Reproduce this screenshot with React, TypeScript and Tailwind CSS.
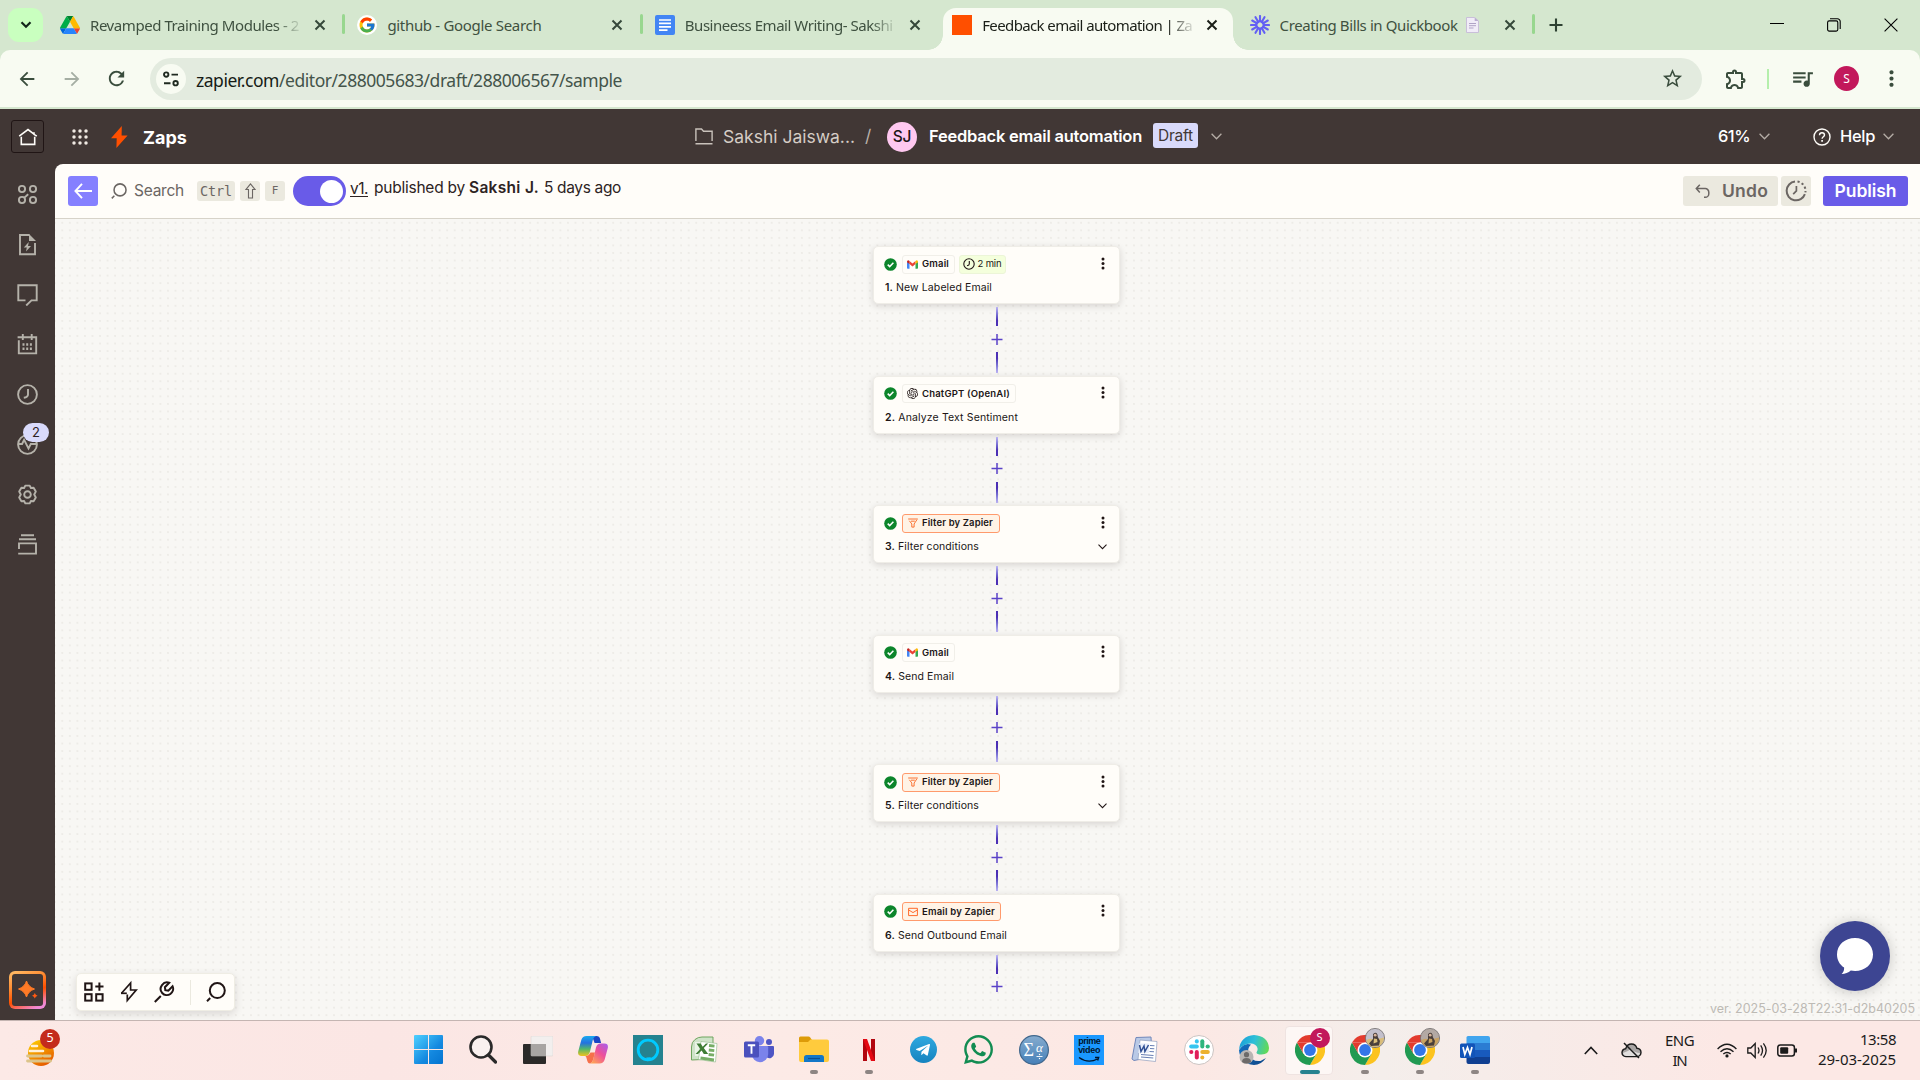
import { useLayoutEffect, useRef, type ReactNode } from "react";
import { FcGoogle } from "react-icons/fc";
import { SiOpenai } from "react-icons/si";
import { FaWhatsapp, FaTelegramPlane } from "react-icons/fa";
import {
  MdArrowBack,
  MdArrowForward,
  MdRefresh,
  MdStarOutline,
  MdOutlineExtension,
  MdQueueMusic,
  MdMoreVert,
} from "react-icons/md";

/* A line of text whose tracking is adjusted so that it fills the given width. */
function Fit({ w, className = "", children }: { w: number; className?: string; children: ReactNode }) {
  const ref = useRef<HTMLSpanElement>(null);
  useLayoutEffect(() => {
    const el = ref.current;
    if (!el) return;
    el.style.letterSpacing = "0px";
    const natural = el.getBoundingClientRect().width;
    const count = (el.textContent || "").length || 1;
    el.style.letterSpacing = `${(w - natural) / count}px`;
  }, [w]);
  return (
    <span ref={ref} className={`inline-block shrink-0 whitespace-nowrap ${className}`}>
      {children}
    </span>
  );
}

/* ---------- Browser ---------- */

function CloseX({ className = "" }: { className?: string }) {
  return (
    <svg width="12" height="12" viewBox="0 0 12 12" className={className}>
      <path d="M1.5 1.5l9 9M10.5 1.5l-9 9" stroke="currentColor" strokeWidth="2" fill="none" />
    </svg>
  );
}

const DriveIcon = () => (
  <svg width="20" height="18" viewBox="0 0 87.3 78">
    <path fill="#0066da" d="m6.6 66.85 3.85 6.65c.8 1.4 1.95 2.5 3.3 3.3l13.75-23.8h-27.5c0 1.55.4 3.1 1.2 4.5z" />
    <path fill="#00ac47" d="m43.65 25-13.75-23.8c-1.35.8-2.5 1.9-3.3 3.3l-25.4 44a9.06 9.06 0 0 0-1.2 4.5h27.5z" />
    <path fill="#ea4335" d="m73.55 76.8c1.35-.8 2.5-1.9 3.3-3.3l1.6-2.75 7.65-13.25c.8-1.4 1.2-2.95 1.2-4.5h-27.5l5.85 11.5z" />
    <path fill="#00832d" d="m43.65 25 13.75-23.8c-1.35-.8-2.9-1.2-4.5-1.2h-18.5c-1.6 0-3.15.45-4.5 1.2z" />
    <path fill="#2684fc" d="m59.8 53h-32.3l-13.75 23.8c1.35.8 2.9 1.2 4.5 1.2h50.8c1.6 0 3.15-.45 4.5-1.2z" />
    <path fill="#ffba00" d="m73.4 26.5-12.7-22c-.8-1.4-1.95-2.5-3.3-3.3l-13.75 23.8 16.15 28h27.45c0-1.55-.4-3.1-1.2-4.5z" />
  </svg>
);

const DocsIcon = () => (
  <svg width="20" height="20" viewBox="0 0 20 20">
    <rect width="20" height="20" rx="2" fill="#4285f4" />
    <path d="M4 5h12M4 8.4h12M4 11.8h12M4 15.2h8.5" stroke="#fff" strokeWidth="1.7" />
  </svg>
);

const BurstIcon = () => (
  <svg width="20" height="20" viewBox="-10 -10 20 20">
    {Array.from({ length: 12 }, (_, i) => (
      <path key={i} d="M0 -3.4V-9" stroke="#6360f4" strokeWidth="2.1" strokeLinecap="round" transform={`rotate(${i * 30})`} />
    ))}
    <circle r="4" fill="none" stroke="#6360f4" strokeWidth="1.7" />
  </svg>
);

const PageEmoji = () => (
  <svg width="13" height="16" viewBox="0 0 13 16" className="ml-2">
    <path d="M.5.5h8.2L12.5 4v11.5H.5z" fill="#f1ecf8" stroke="#c9bfd9" />
    <path d="M8.7.5V4h3.8z" fill="#b9acd0" />
    <path d="M3 6.5h7M3 8.7h7M3 11h4.5" stroke="#b0a3c6" strokeWidth="1" />
  </svg>
);

type TabData = { icon: ReactNode; text: string; w: number; active?: boolean; fade?: boolean; line?: boolean; extra?: ReactNode };

const tabs: TabData[] = [
  { icon: <DriveIcon />, text: "Revamped Training Modules - 2", w: 209, fade: true, line: true },
  {
    icon: (
      <span className="flex h-5 w-5 items-center justify-center rounded-full bg-white">
        <FcGoogle size={18} />
      </span>
    ),
    text: "github - Google Search",
    w: 154,
    line: true,
  },
  { icon: <DocsIcon />, text: "Busineess Email Writing- Sakshi", w: 208, fade: true },
  { icon: <span className="h-5 w-5 bg-[#ff4f00]" />, text: "Feedback email automation | Za", w: 210, fade: true, active: true },
  { icon: <BurstIcon />, text: "Creating Bills in Quickbook", w: 178, line: true, extra: <PageEmoji /> },
];

function Tab({ t }: { t: TabData }) {
  return (
    <div className="relative flex h-[50px] w-[297.4px] shrink-0 items-center pl-[13px]">
      {t.active && (
        <>
          <div className="absolute inset-x-[4px] bottom-0 top-[8px] rounded-t-[13px] bg-[#f8fbf2]" />
          <div className="absolute bottom-0 left-[-11px] h-[15px] w-[15px] bg-[radial-gradient(circle_at_0_0,transparent_14.5px,#f8fbf2_15px)]" />
          <div className="absolute bottom-0 right-[-11px] h-[15px] w-[15px] bg-[radial-gradient(circle_at_100%_0,transparent_14.5px,#f8fbf2_15px)]" />
        </>
      )}
      <span className="relative flex h-5 w-5 shrink-0 items-center justify-center">{t.icon}</span>
      <span
        className={`relative ml-[10px] flex h-6 w-[212px] items-center overflow-hidden ${
          t.fade ? "[mask-image:linear-gradient(to_right,#000_88%,rgba(0,0,0,0.2)_98%)]" : ""
        }`}
      >
        <Fit w={t.w} className={`text-[15px] leading-6 ${t.active ? "text-[#1b1f18]" : "text-[#3f5140]"}`}>
          {t.text}
        </Fit>
        {t.extra}
      </span>
      <CloseX className={`relative ml-[12px] shrink-0 ${t.active ? "text-[#1b1f18]" : "text-[#35483a]"}`} />
      {t.line && <span className="absolute right-[-1px] top-[14px] h-5 w-[3px] rounded bg-[#98d78f]" />}
    </div>
  );
}

function Browser() {
  return (
    <div className="h-[109px] shrink-0 bg-[#d5e7cf] font-['Noto_Sans','Open_Sans',sans-serif]">
      <div className="flex h-[50px]">
        <div className="ml-2 mr-1 mt-2 flex h-[34px] w-[35px] items-center justify-center rounded-[11px] bg-[#c9ffbf]">
          <svg width="12" height="8" viewBox="0 0 12 8">
            <path d="M1.5 1.3L6 5.8l4.5-4.5" fill="none" stroke="#12251a" strokeWidth="2.2" />
          </svg>
        </div>
        {tabs.map((t) => (
          <Tab key={t.text} t={t} />
        ))}
        <svg width="14" height="14" viewBox="0 0 14 14" className="ml-[15px] mt-[18px]">
          <path d="M7 .5v13M.5 7h13" stroke="#2f4233" strokeWidth="2.1" />
        </svg>
        <div className="ml-auto mr-[22px] flex h-[50px] items-center gap-[43px] text-black">
          <svg width="14" height="14" viewBox="0 0 14 14">
            <path d="M0 5.5h14" stroke="currentColor" />
          </svg>
          <svg width="14" height="14" viewBox="0 0 14 14" fill="none" stroke="currentColor" strokeWidth="1.1">
            <rect x="0.6" y="2.9" width="10.2" height="10.2" rx="1.6" />
            <path d="M3 .8h7.4a2.8 2.8 0 0 1 2.8 2.8V11" />
          </svg>
          <svg width="14" height="14" viewBox="0 0 14 14">
            <path d="M.6.6l12.8 12.8M13.4.6L.6 13.4" stroke="currentColor" strokeWidth="1.1" />
          </svg>
        </div>
      </div>
      <div className="flex h-[57px] items-center rounded-t-[10px] bg-[#f8fbf2] text-[#3a4d3d]">
        <MdArrowBack size={22} className="ml-[16px]" />
        <MdArrowForward size={22} className="ml-[23px] text-[#a5aea3]" />
        <MdRefresh size={23} className="ml-[22px]" />
        <div className="ml-[22px] flex h-[42px] w-[1552px] items-center rounded-full bg-[#e3ebdf]">
          <span className="ml-[6px] flex h-[30px] w-[30px] items-center justify-center rounded-full bg-[#f8fbf2]">
            <svg width="16" height="16" viewBox="0 0 16 16" fill="none" stroke="#1f2a20" strokeWidth="1.9">
              <circle cx="3.2" cy="3.6" r="2.2" />
              <path d="M8.5 3.6H15M1 12.2h6.5" />
              <circle cx="12.6" cy="12.2" r="2.2" />
            </svg>
          </span>
          <Fit w={426} className="ml-[10px] mt-[3px] text-[17.5px] text-[#44544a]">
            <span className="text-[#161b16]">zapier.com</span>/editor/288005683/draft/288006567/sample
          </Fit>
          <MdStarOutline size={23} className="ml-auto mr-[18px]" />
        </div>
        <MdOutlineExtension size={24} className="ml-[22px]" />
        <span className="ml-[19px] h-5 w-[2px] bg-[#b5efac]" />
        <MdQueueMusic size={25} className="ml-[21px]" />
        <span className="ml-[19px] flex h-[25px] w-[25px] items-center justify-center rounded-full bg-[#c2185b] text-[12px] text-white">
          S
        </span>
        <MdMoreVert size={25} className="ml-[20px]" />
      </div>
    </div>
  );
}

/* ---------- Zapier header ---------- */

function Chevron({ color = "#b5ada6", w = 11 }: { color?: string; w?: number }) {
  return (
    <svg width={w} height={w * 0.64} viewBox="0 0 11 7">
      <path d="M.6.8l4.9 4.9L10.4.8" fill="none" stroke={color} strokeWidth="1.3" />
    </svg>
  );
}

function TopHeader() {
  return (
    <div className="flex h-[55px] shrink-0 items-center bg-[#413735] text-white">
      <span className="ml-[11px] flex h-[33px] w-[33px] items-center justify-center rounded-[3px] border border-[#201515]">
        <svg width="20" height="18" viewBox="0 0 20 18" fill="none" stroke="#fffdf9" strokeWidth="1.6">
          <path d="M1.2 8.2L10 1.6l6 4.5M16 4.2v2.2l2.8 1.8M3.3 8.8v7.6h13.4V8.8" />
        </svg>
      </span>
      <svg width="16" height="16" viewBox="0 0 16 16" className="ml-[28px]" fill="#f0e9e2">
        {[2, 8, 14].map((y) => [2, 8, 14].map((x) => <circle key={`${x}-${y}`} cx={x} cy={y} r="1.75" />))}
      </svg>
      <svg width="17" height="22" viewBox="0 0 17 22" className="ml-[23px]">
        <path d="M10.8 0L0 12.3h5.7L5.4 22 16.6 9.4h-6z" fill="#ff4f00" />
      </svg>
      <Fit w={44} className="ml-[15px] mt-px text-[18px] font-bold">Zaps</Fit>

      <svg width="18" height="17" viewBox="0 0 18 17" className="ml-[508px]" fill="none" stroke="#c9c2bb" strokeWidth="1.4">
        <path d="M.9 13V1h5.6l2 2.2h8.6V13M.5 15.8h17" />
      </svg>
      <Fit w={132} className="ml-[10px] mt-px text-[17.5px] text-[#d5cdc6]">Sakshi Jaiswa...</Fit>
      <span className="ml-[10px] w-[8px] text-[17.5px] text-[#b9b0a9]">/</span>
      <span className="ml-[14px] flex h-[30px] w-[30px] items-center justify-center rounded-full bg-[#ffc8f0] text-[15.5px] font-medium tracking-[-0.3px] text-[#201515]">
        SJ
      </span>
      <Fit w={213} className="ml-[12px] text-[16.5px] font-semibold">Feedback email automation</Fit>
      <span className="mb-[2px] ml-[11px] flex h-[25px] w-[45px] items-center justify-center rounded-[3px] bg-[#d9dafb] text-[#413735]">
        <Fit w={35} className="text-[15.5px]">Draft</Fit>
      </span>
      <span className="ml-[13px]">
        <Chevron />
      </span>

      <Fit w={32} className="ml-auto text-[16.5px] font-medium">61%</Fit>
      <span className="ml-[9px]">
        <Chevron />
      </span>
      <svg width="18" height="18" viewBox="0 0 18 18" className="ml-[43px]" fill="none" stroke="#fffdf9" strokeWidth="1.4">
        <circle cx="9" cy="9" r="8" />
        <path d="M6.5 7.3C6.5 5.6 7.6 4.8 9 4.8s2.5.9 2.5 2.2c0 1.7-2.4 1.9-2.4 3.7" />
        <path d="M9.1 12v1.7" strokeWidth="1.7" />
      </svg>
      <Fit w={35} className="ml-[9px] text-[16.5px] font-medium">Help</Fit>
      <span className="ml-[8px] mr-[26px]">
        <Chevron />
      </span>
    </div>
  );
}

/* ---------- Sidebar ---------- */

const sideIcons: ReactNode[] = [
  <>
    <circle cx="5" cy="5" r="3.1" />
    <circle cx="16" cy="5" r="3.1" />
    <circle cx="5" cy="16" r="3.1" />
    <circle cx="16" cy="16" r="3.1" />
    <path d="M7.4 13.6l3.8-3.4" />
  </>,
  <>
    <path d="M18 9v11.2H3V1h9.5" />
    <path d="M12 0l7 7h-7z" fill="#b5b2aa" stroke="none" />
    <path d="M11.8 8l-5 5.6h3l-.8 4 5-5.6h-3z" fill="#b5b2aa" stroke="none" />
  </>,
  <path key="c" d="M8.5 16.4H1.3V1.2h18.4v15.2h-5.2L9.2 21.5" />,
  <>
    <path d="M1.8 6.2v13.2h17.4V3.2H.6M5.8 0v6M14.7 0v6" />
    <path d="M5.5 10.5h2m1.7 0h2m1.7 0h2M5.5 14.8h2m1.7 0h2m1.7 0h2" strokeWidth="2.4" />
  </>,
  <>
    <circle cx="10.5" cy="10.5" r="9.4" />
    <path d="M11 5v5.4c0 1.6-1.3 2.9-4.2 3.3" />
  </>,
  <>
    <circle cx="10.5" cy="10.5" r="9.4" />
    <path d="M1.5 10h3.6l2-4.2 4.4 8.7 2.3-4.5H19" />
  </>,
  <>
    <path d="M8.3 1.6h4.4l1.2 2.4 2.7-.2 2.2 3.8-1.6 2.9 1.6 2.9-2.2 3.8-2.7-.2-1.2 2.4H8.3L7.1 17l-2.7.2-2.2-3.8 1.6-2.9-1.6-2.9 2.2-3.8 2.7.2z" strokeLinejoin="round" />
    <circle cx="10.5" cy="10.5" r="3.3" />
  </>,
  <path key="s" d="M4 1.2h13M2 5.2h17M2 15V9.4h17v10.2H1.2" />,
];

function Sidebar() {
  return (
    <div className="flex w-[55px] shrink-0 flex-col items-center bg-[#413735] pt-[6px]">
      {sideIcons.map((icon, i) => (
        <div key={i} className="relative flex h-[50px] w-full items-center justify-center">
          <svg width="21" height="22" viewBox="0 0 21 22" fill="none" stroke="#b5b2aa" strokeWidth="1.9">
            {icon}
          </svg>
          {i === 5 && (
            <span className="absolute left-[23px] top-[3px] flex h-[19px] w-[26px] items-center justify-center rounded-full bg-[#d9dafb] text-[13px] text-[#2d2323]">
              2
            </span>
          )}
        </div>
      ))}
      <div className="mb-[11px] mt-auto h-[38px] w-[37px] rounded-[6px] bg-[linear-gradient(155deg,#ffb964_5%,#ff8a30_35%,#ff4f00_60%,#f08ad8_90%)] p-[3px]">
        <div className="flex h-full w-full items-center justify-center rounded-[3px] bg-[#413735]">
          <svg width="20" height="20" viewBox="0 0 20 20">
            <path d="M8.5 1Q10.3 7 16.5 9 10.3 11 8.5 17 6.7 11 .5 9 6.7 7 8.5 1z" fill="#ff7a26" stroke="#ff7a26" />
            <path d="M16.8 13q.6 2.1 2.8 2.8-2.2.7-2.8 2.8-.6-2.1-2.8-2.8 2.2-.7 2.8-2.8z" fill="#ff5a12" />
          </svg>
        </div>
      </div>
    </div>
  );
}

/* ---------- Editor ---------- */

function Magnifier({ size, color, sw }: { size: number; color: string; sw: number }) {
  return (
    <svg width={size} height={size} viewBox="0 0 20 20" fill="none" stroke={color} strokeWidth={sw}>
      <circle cx="11.3" cy="8.6" r="7.5" />
      <path d="M1 19.2l3.2-3.2" />
    </svg>
  );
}

const Kbd = ({ children, className = "" }: { children: ReactNode; className?: string }) => (
  <span
    className={`flex h-5 shrink-0 items-center justify-center rounded-[3px] bg-[#ebe9df] font-['DejaVu_Sans_Mono',monospace] text-[#6b6663] ${className}`}
  >
    {children}
  </span>
);

function EditorBar() {
  return (
    <div className="flex h-[55px] shrink-0 items-center rounded-tl-[8px] border-b border-[#d7d3c9] bg-[#fffdf9] text-[#2d2323]">
      <span className="ml-[13px] flex h-[30px] w-[30px] items-center justify-center rounded-[3px] bg-[#8580ff]">
        <svg width="18" height="16" viewBox="0 0 18 16" fill="none" stroke="#fff" strokeWidth="1.9">
          <path d="M1.2 8H18M8 .8L1.4 8 8 15.2" />
        </svg>
      </span>
      <span className="ml-[13px]">
        <Magnifier size={16} color="#6b6663" sw={1.9} />
      </span>
      <Fit w={50} className="ml-[7px] text-[15.5px] text-[#6b6663]">Search</Fit>
      <Kbd className="ml-[13px] w-[38px]">
        <Fit w={32} className="text-[13.5px]">Ctrl</Fit>
      </Kbd>
      <Kbd className="ml-[5px] w-5">
        <svg width="11" height="16" viewBox="0 0 12 16" fill="none" stroke="#6b6663" strokeWidth="1.2" preserveAspectRatio="none">
          <path d="M6 .9l5 5.600H8.200V15H3.800V6.500H1z" />
        </svg>
      </Kbd>
      <Kbd className="ml-[5px] w-5 text-[11px]">F</Kbd>
      <span className="ml-[8px] flex h-[30px] w-[53px] items-center rounded-full bg-[#695be8] pl-[27px]">
        <span className="h-[23px] w-[23px] rounded-full bg-white" />
      </span>
      <span className="mb-[7px] ml-[4px] flex items-baseline text-[15.5px]">
        <Fit w={18} className="relative top-px underline underline-offset-2">v1.</Fit>
        <Fit w={91} className="ml-[6px]">published by</Fit>
        <Fit w={70} className="ml-[4px] font-semibold">Sakshi J.</Fit>
        <Fit w={77} className="ml-[5px]">5 days ago</Fit>
      </span>
      <span className="ml-auto flex h-[30px] w-[95px] items-center rounded-[3px] bg-[#ebe9df] text-[#6b6663]">
        <svg width="15" height="15" viewBox="0 0 15 15" className="ml-[12px]" fill="none" stroke="currentColor" strokeWidth="1.5">
          <path d="M4.8.8L1.3 4.6l3.5 3.8M1.5 4.6h8.7a3.6 3.6 0 0 1 3.6 3.6v1.5a3.6 3.6 0 0 1-3.6 3.6H9" />
        </svg>
        <Fit w={46} className="ml-[12px] text-[17.5px] font-semibold">Undo</Fit>
      </span>
      <span className="ml-[3px] flex h-[30px] w-[30px] items-center justify-center rounded-[3px] bg-[#ebe9df]">
        <svg width="22" height="22" viewBox="0 0 22 22" fill="none" stroke="#6b6663" strokeWidth="2">
          <path d="M10 1.6a9.4 9.4 0 1 0 9.900 12.500" />
          <path d="M12.500 1.500a9.400 9.400 0 0 1 7.900 10.800" strokeDasharray="2.200 2.300" />
          <path d="M11.400 6v4.800l-3.200 3.400" strokeWidth="1.700" />
        </svg>
      </span>
      <span className="ml-[12px] mr-[12px] flex h-[30px] w-[85px] items-center justify-center rounded-[3px] bg-[#695be8] text-white">
        <Fit w={62} className="text-[17.5px] font-semibold">Publish</Fit>
      </span>
    </div>
  );
}

const GmailIcon = () => (
  <svg width="11" height="9" viewBox="0 0 22 17">
    <path d="M0 3v12.500Q0 17 1.500 17H5V6.500z" fill="#4285f4" />
    <path d="M22 3v12.500q0 1.500-1.500 1.500H17V6.500z" fill="#34a853" />
    <path d="M5 1.500l6 4.800 6-4.800v6.200l-6 4.800-6-4.800z" fill="#ea4335" />
    <path d="M0 3Q0 0 2.500 0 3.500 0 5 1.300v6.400L0 3.800z" fill="#c5221f" />
    <path d="M22 3q0-3-2.500-3Q18.500 0 17 1.300v6.400l5-3.900z" fill="#fbbc04" />
  </svg>
);

const FilterIcon = () => (
  <svg width="10" height="10" viewBox="0 0 10 10" fill="none" stroke="#f9651f" strokeWidth="0.900">
    <path d="M.2 1h9.600M1.400 2.800L3.800 6v3.100h2.300V6l2.800-4.200M3 3.200h3.800" />
  </svg>
);

const MailIcon = () => (
  <svg width="10" height="10" viewBox="0 0 10 10" fill="none" stroke="#ff6a2b" strokeWidth="1">
    <path d="M.6 1.300h8.800v7.300H.6zM.8 3L5 5.600 9.200 3" />
  </svg>
);

type Step = { icon: ReactNode; app: string; appW: number; title: string; titleW: number; zap?: boolean; time?: boolean; fold?: boolean; boxW: string };

const steps: Step[] = [
  { icon: <GmailIcon />, app: "Gmail", appW: 27, boxW: "w-[53px]", title: "New Labeled Email", titleW: 107, time: true },
  { icon: <SiOpenai size={11} color="#201515" />, app: "ChatGPT (OpenAI)", appW: 88, boxW: "w-[114px]", title: "Analyze Text Sentiment", titleW: 133 },
  { icon: <FilterIcon />, app: "Filter by Zapier", appW: 71, boxW: "w-[98px]", title: "Filter conditions", titleW: 94, zap: true, fold: true },
  { icon: <GmailIcon />, app: "Gmail", appW: 27, boxW: "w-[53px]", title: "Send Email", titleW: 69 },
  { icon: <FilterIcon />, app: "Filter by Zapier", appW: 71, boxW: "w-[98px]", title: "Filter conditions", titleW: 94, zap: true, fold: true },
  { icon: <MailIcon />, app: "Email by Zapier", appW: 73, boxW: "w-[99px]", title: "Send Outbound Email", titleW: 122, zap: true },
];

function StepCard({ s, n }: { s: Step; n: number }) {
  return (
    <div className="h-[58px] w-[247px] shrink-0 rounded-[5px] border border-[#efede7] bg-[#fffdf9] px-[9px] pt-[7px] text-[#201515] shadow-[0_2px_7px_rgba(32,21,21,0.15)]">
      <div className="flex h-[20px] items-center">
        <svg width="13" height="13" viewBox="0 0 13 13" className="ml-[0.500px] shrink-0">
          <circle cx="6.500" cy="6.500" r="6.300" fill="#0c852b" />
          <path d="M3.700 6.600l2 2 3.700-3.900" fill="none" stroke="#fff" strokeWidth="1.500" />
        </svg>
        <span
          className={`ml-[5px] flex h-[19px] shrink-0 items-center rounded-[3px] border ${s.boxW} ${
            s.zap ? "border-[#ff9a6c] bg-[#fff3e6]" : "border-[#f1efe9] bg-[#fffdf9]"
          }`}
        >
          <span className="ml-[4.500px] flex w-[11px] justify-center">{s.icon}</span>
          <Fit w={s.appW} className="ml-[4px] text-[9.500px] font-semibold leading-none">{s.app}</Fit>
        </span>
        {s.time && (
          <span className="ml-[4px] flex h-[19px] w-[47px] items-center rounded-[3px] border border-[#ecf5d8] bg-[#f4ffdc]">
            <svg width="12" height="12" viewBox="0 0 12 12" className="ml-[3px]" fill="none" stroke="#201515" strokeWidth="1.100">
              <circle cx="6" cy="6" r="5.200" />
              <path d="M6.300 3v2.900c0 .9-.8 1.600-2.300 1.900" />
            </svg>
            <Fit w={24} className="mb-px ml-[3px] text-[9.500px] leading-none">2 min</Fit>
          </span>
        )}
        <svg width="4" height="13" viewBox="0 0 4 13" className="mb-[2px] ml-auto mr-[5px]">
          <circle cx="2" cy="2" r="1.500" fill="#201515" />
          <circle cx="2" cy="6.500" r="1.500" fill="#201515" />
          <circle cx="2" cy="11" r="1.500" fill="#201515" />
        </svg>
      </div>
      <div className="ml-[2px] mt-[6px] flex h-4 items-center">
        <Fit w={s.titleW} className="text-[10.500px] leading-4">
          <span className="font-semibold">{n}.</span> {s.title}
        </Fit>
        {s.fold && (
          <span className="ml-auto mr-[3px]">
            <Chevron color="#201515" w={9} />
          </span>
        )}
      </div>
    </div>
  );
}

function Connector({ last }: { last: boolean }) {
  return (
    <div className="flex h-[71.500px] shrink-0 flex-col items-center pt-[3px]">
      <div className="h-[19px] w-[2px] bg-gradient-to-b from-[#bdb5f5] to-[#4b2fb5] to-70%" />
      <svg width="12" height="11" viewBox="0 0 12 11" className="my-[7.500px] shrink-0">
        <path d="M6 0v11M.5 5.500h11" stroke="#5a42c8" strokeWidth="1.500" />
      </svg>
      {!last && <div className="h-[21px] w-[2px] bg-gradient-to-b from-[#4b2fb5] from-30% to-[#bdb5f5]" />}
    </div>
  );
}

function Canvas() {
  return (
    <div className="relative flex-1 overflow-hidden bg-[#f8f7f4] bg-[radial-gradient(circle_at_3.780px_3.780px,#e5e3de_0.500px,transparent_0.900px)] bg-[size:7.560px_7.560px] bg-[position:3.500px_0px]">
      <div className="ml-[818px] flex w-[247px] flex-col items-center pt-[27px]">
        {steps.map((s, i) => (
          <div key={i} className="flex flex-col items-center">
            <StepCard s={s} n={i + 1} />
            <Connector last={i === steps.length - 1} />
          </div>
        ))}
      </div>

      <div className="absolute bottom-[9px] left-[21px] flex h-[38px] w-[159px] items-center rounded-[5px] border border-[#efede4] bg-[#fffdf9] shadow-[0_3px_8px_rgba(32,21,21,0.14)]">
        <svg width="20" height="20" viewBox="0 0 20 20" className="ml-[7px] shrink-0" fill="none" stroke="#201515" strokeWidth="2">
          <rect x="1.200" y="1.400" width="6.400" height="6.400" />
          <rect x="1.200" y="12.200" width="6.400" height="6.400" />
          <rect x="12.200" y="12.200" width="6.400" height="6.400" />
          <path d="M15.400.5v8.200M11.300 4.600h8.200" />
        </svg>
        <svg width="18" height="24" viewBox="0 0 18 24" className="ml-[16px] shrink-0" fill="none" stroke="#201515" strokeWidth="1.700">
          <path d="M1.500 13.300L10.600 3v7h5.600L7.300 20.500v-6" />
          <path d="M1 13.300h5.800" />
        </svg>
        <svg width="21" height="22" viewBox="0 0 21 22" className="ml-[16px] shrink-0" fill="none" stroke="#201515" strokeWidth="2">
          <path d="M.8 21l6-6" />
          <path d="M15.200 1.800L10.900 6.200l.4 3 3 .4 4.300-4.300c1.400 3-.1 6.200-2.200 7.700-2.600 1.800-6.100 1.400-8.200-1-2-2.300-2-5.500-.2-7.900 1.700-2.300 4.600-3.300 7.200-2.300z" />
        </svg>
        <span className="ml-[15px] h-[25px] w-px shrink-0 bg-[#ebe9df]" />
        <span className="ml-[15px] shrink-0">
          <Magnifier size={20} color="#201515" sw={2} />
        </span>
      </div>

      <span className="absolute bottom-[1px] right-[5px] text-[#bdbab4]">
        <Fit w={205} className="text-[12.500px] leading-5">ver. 2025-03-28T22:31-d2b40205</Fit>
      </span>
      <div className="absolute bottom-[29px] right-[30px] flex h-[70px] w-[70px] items-center justify-center rounded-full bg-[#3d4592] shadow-[0_1px_14px_rgba(0,0,0,0.20)]">
        <svg width="36" height="36" viewBox="0 0 36 36" fill="#fff">
          <path d="M18 0c10 0 18 6.800 18 16.500S28 33 18 33c-1.500 0-2.900-.1-4.200-.4C11.500 35 8 36 4.600 36c2-1.900 2.700-4 2.500-6.500C2.700 26.800 0 22 0 16.500 0 6.800 8 0 18 0z" />
        </svg>
      </div>
    </div>
  );
}

/* ---------- Taskbar ---------- */

const Windows = () => (
  <svg width="29" height="29" viewBox="0 0 29 29">
    <defs>
      <linearGradient id="win" x1="0" y1="0" x2="1" y2="1">
        <stop offset="0" stopColor="#4fd0ff" />
        <stop offset="0.600" stopColor="#1489e0" />
        <stop offset="1" stopColor="#0474d0" />
      </linearGradient>
    </defs>
    <path d="M1 0h13v14H0V1q0-1 1-1zM15 0h13q1 0 1 1v13H15zM0 15h14v14H1q-1 0-1-1zM15 15h14v13q0 1-1 1H15z" fill="url(#win)" />
  </svg>
);

const TaskSearch = () => (
  <svg width="28" height="29" viewBox="0 0 28 29" fill="none" stroke="#2a2a2a">
    <circle cx="12" cy="12" r="10.500" fill="#f9f1ef" strokeWidth="2.600" />
    <path d="M19.500 20l7 7" strokeWidth="3.200" strokeLinecap="round" />
  </svg>
);

const TaskView = () => (
  <svg width="30" height="28" viewBox="0 0 30 28">
    <rect x="0" y="8" width="23" height="20" rx="1" fill="#2b2a29" />
    <rect x="8" y="0" width="22" height="20" rx="1" fill="#f2f0ef" opacity="0.970" stroke="#d5d0ce" strokeWidth="0.500" />
    <rect x="8" y="8" width="15" height="12" fill="#a8a5a3" />
  </svg>
);

const Copilot = () => (
  <svg width="30" height="28" viewBox="0 0 30 28">
    <defs>
      <linearGradient id="cpA" x1="0" y1="0" x2="0" y2="1">
        <stop offset="0" stopColor="#1ba9ee" />
        <stop offset="0.350" stopColor="#2471e0" />
        <stop offset="0.650" stopColor="#52b76a" />
        <stop offset="1" stopColor="#f0c31b" />
      </linearGradient>
      <linearGradient id="cpB" x1="1" y1="0" x2="0.200" y2="1">
        <stop offset="0" stopColor="#a55ff0" />
        <stop offset="0.500" stopColor="#ee4f9a" />
        <stop offset="1" stopColor="#ffa256" />
      </linearGradient>
    </defs>
    <path d="M14 0h4.500q3 0 3.600 3l1 4h-6.500z" fill="#1c46c4" />
    <path d="M8.500 0H18q-2.500.8-3.200 4L12 15.500Q11 20 7 20H3.500Q-.6 20 .2 15.500L3.300 4Q4.500 0 8.500 0z" fill="url(#cpA)" />
    <path d="M21.500 27.500H12q2.500-.8 3.200-4L18 11.500Q19 7.500 23 7.500h3.500q4.100 0 3.300 4.500l-3.100 11.500q-1.200 4-5.200 4z" fill="url(#cpB)" />
    <path d="M7 20q1.200 0 1.500 2l.8 3q.7 2.500 2.700 2.500 2.300-.5 3.200-4l1.700-7h-4.400Q11 20 7 20z" fill="#f6704a" />
  </svg>
);

const Alexa = () => (
  <svg width="30" height="30" viewBox="0 0 30 30">
    <rect width="30" height="30" fill="#25828f" />
    <circle cx="15" cy="15" r="9.800" fill="none" stroke="#00caff" strokeWidth="2.800" />
    <path d="M13.200 22.500q1.200 1.300.9 3.800 2-.2 4.500-1.500l-1-2.500z" fill="#00caff" />
  </svg>
);

const ExcelOld = () => (
  <svg width="28" height="27" viewBox="0 0 28 27">
    <path d="M5 3.500Q8 1 12 1h11v22L1.500 24V11q0-5 3.500-7.500z" fill="#cfe3c8" stroke="#6fa55f" />
    <path d="M5 6h14v14H5z" fill="#eaf4e6" />
    <path d="M11 5.500l16 2-1.500 18.500-17-2.500z" fill="#fff" stroke="#8db887" strokeWidth="0.600" />
    <path d="M19 9.500l5.500.6M18.800 14l5.500.6M18.600 18.500l5.500.7M10.500 22l13.500 2" stroke="#77ad66" strokeWidth="2.800" />
    <path d="M6.500 7.500h4.200l2 3.200 3.200-3.200h2.300L13.800 12l4.400 6h-4.400l-2.200-3.600L8 18H5.600l4.700-5z" fill="#3f7d35" />
  </svg>
);

const Teams = () => (
  <svg width="30" height="27" viewBox="0 0 30 27">
    <circle cx="25" cy="6" r="3" fill="#4e55c4" />
    <path d="M22 10h7q1 0 1 1v6.500a4.500 4.500 0 0 1-8 3z" fill="#4e55c4" />
    <circle cx="15.500" cy="4.700" r="4.700" fill="#7b83eb" />
    <path d="M9 10h14q1.200 0 1.200 1.200V18a8.200 8.200 0 0 1-16.400 0z" fill="#7b83eb" />
    <rect x="0" y="5.500" width="15" height="16" rx="1.500" fill="#4a50bd" />
    <path d="M3.800 9.300h7.400M7.500 9.300v8.400" stroke="#fff" strokeWidth="1.900" />
  </svg>
);

const Explorer = () => (
  <svg width="30" height="27" viewBox="0 0 30 27">
    <path d="M0 2Q0 .5 1.500.5h8q1 0 1.700.9L13 4v4H0z" fill="#dd9b08" />
    <path d="M0 6h9l2.500-2.500H28q2 0 2 2V24q0 2-2 2H2q-2 0-2-2z" fill="#ffcb3d" />
    <path d="M5 26v-4.500q0-2.500 2.500-2.500h15q2.500 0 2.500 2.500V26z" fill="#1277c8" />
    <path d="M9 22.500h12" stroke="#0a4f93" strokeWidth="1.200" />
  </svg>
);

const Netflix = () => (
  <svg width="12" height="22" viewBox="0 0 12 22">
    <path d="M0 0h4v22H0zM8 0h4v22H8z" fill="#b1060f" />
    <path d="M0 0h4l8 22H8z" fill="#e50914" />
  </svg>
);

const Telegram = () => (
  <span className="flex h-[27px] w-[27px] items-center justify-center rounded-full bg-gradient-to-b from-[#2fa9e0] to-[#1583bf] text-white">
    <FaTelegramPlane size={16} className="mr-[2px]" />
  </span>
);

const Sigma = () => (
  <svg width="30" height="30" viewBox="0 0 30 30" className="font-['Liberation_Serif',serif]">
    <defs>
      <linearGradient id="sig" x1="0" y1="0" x2="0" y2="1">
        <stop offset="0" stopColor="#86accf" />
        <stop offset="1" stopColor="#4680b8" />
      </linearGradient>
    </defs>
    <circle cx="15" cy="15" r="14.400" fill="url(#sig)" stroke="#41678c" strokeWidth="1.200" />
    <text x="4.500" y="21" fontSize="18" fill="#fff">Σ</text>
    <text x="17" y="17" fontSize="13" fontStyle="italic" fill="#fff">α</text>
    <path d="M17.500 21.500h6" stroke="#fff" strokeWidth="0.900" />
    <circle cx="20.500" cy="19.500" r="0.700" fill="#fff" />
    <circle cx="20.500" cy="23.500" r="0.700" fill="#fff" />
  </svg>
);

const Prime = () => (
  <span className="flex h-[30px] w-[30px] flex-col items-center bg-[#1a98ff] pt-[2px] font-['Liberation_Sans',sans-serif] text-[9px] font-bold leading-[9px] text-[#00152b]">
    <Fit w={22}>prime</Fit>
    <Fit w={22}>video</Fit>
    <svg width="22" height="7" viewBox="0 0 22 7" className="mt-[1px] shrink-0">
      <path d="M1 1.500Q10 8 19.500 3M17 1.500h3.700l-1 3" fill="none" stroke="#00152b" strokeWidth="1.300" />
    </svg>
  </span>
);

const WordOld = () => (
  <svg width="27" height="27" viewBox="0 0 27 27">
    <path d="M5 1.500l15-.5 1 20-18 3.500L1 23z" fill="#b9c9e6" stroke="#7188bb" />
    <path d="M9 4l17 1.500-1.500 20L7 23.500z" fill="#fff" stroke="#8f9dbd" strokeWidth="0.700" />
    <path d="M19 9.500l4.500.3M19 12.500l4.300.3M18.500 15.500l4.500.3M10 18.500l12.500 1M10 21l12.300 1" stroke="#6980b5" strokeWidth="1.100" />
    <path d="M8 7.500h10.500l-.7 9.500H7.300z" fill="#e8eefa" />
    <path d="M8.500 9l1.500 6.500 3-5.500.9 5.500L17.500 9" fill="none" stroke="#2f4f93" strokeWidth="1.500" />
  </svg>
);

const Slack = () => (
  <span className="flex h-[30px] w-[30px] items-center justify-center rounded-full border border-[#ccc4c2] bg-white">
    <svg width="21" height="21" viewBox="0 0 21 21">
      <rect x="5.800" y="0.200" width="4" height="4.200" rx="2" fill="#36c5f0" />
      <rect x="0.200" y="5.500" width="9.600" height="4" rx="2" fill="#36c5f0" />
      <rect x="11.300" y="0.200" width="4" height="9.300" rx="2" fill="#2eb67d" />
      <rect x="16.600" y="5.500" width="4.200" height="4" rx="2" fill="#2eb67d" />
      <rect x="0.200" y="11" width="4.200" height="4" rx="2" fill="#e01e5a" />
      <rect x="5.800" y="11" width="4" height="9.600" rx="2" fill="#e01e5a" />
      <rect x="11.300" y="11" width="9.500" height="4" rx="2" fill="#ecb22e" />
      <rect x="11.300" y="16.400" width="4" height="4.200" rx="2" fill="#ecb22e" />
    </svg>
  </span>
);

const Edge = () => (
  <svg width="30" height="30" viewBox="0 0 30 30">
    <defs>
      <linearGradient id="edA" x1="0" y1="0.300" x2="1" y2="0.500">
        <stop offset="0" stopColor="#1b9fd9" />
        <stop offset="0.500" stopColor="#2fc0d8" />
        <stop offset="1" stopColor="#62d957" />
      </linearGradient>
      <linearGradient id="edB" x1="0" y1="0" x2="1" y2="1">
        <stop offset="0" stopColor="#1572c4" />
        <stop offset="1" stopColor="#0d4585" />
      </linearGradient>
    </defs>
    <path d="M0 15Q5 7 12 9.500q-4 4-2.500 9.500 3 8 12 7l5.500-3Q22 30 15 30 1 29 0 15z" fill="url(#edB)" />
    <path d="M0 14.500Q1.500 1 15 0q14 1 15 13 0 6.500-7.500 6.500-5 0-5-2 1.700-2 1-4.500-1.500-4.500-7-4.500Q4 8.800 0 14.500z" fill="url(#edA)" />
    <circle cx="7.500" cy="22" r="7" fill="#b9b5b3" />
    <circle cx="7.500" cy="19.700" r="2.600" fill="#6d6a69" />
    <path d="M3 27q0-4 4.500-4t4.500 4q-4.500 3-9 0z" fill="#6d6a69" />
  </svg>
);

function Chrome({ badge }: { badge: ReactNode }) {
  return (
    <span className="relative block h-[30px] w-[30px]">
      <svg width="30" height="30" viewBox="-15 -15 30 30">
        <path d="M-13-7.500A15 15 0 0 1 13-7.500H0z" fill="#e33b2e" />
        <path d="M13-7.500A15 15 0 0 1 0 15L6.500 3.700 6-7.500z" fill="#fcc31e" />
        <path d="M-13-7.500A15 15 0 0 0 0 15L6.500 3.700-6.500 3.700z" fill="#219a52" />
        <path d="M-13-7.500L-6.500 3.700 0-7.500z" fill="#e33b2e" />
        <circle r="7.500" fill="#fff" />
        <circle r="5.900" fill="#3376e8" />
      </svg>
      <span className="absolute right-[-5px] top-[-7px]">{badge}</span>
    </span>
  );
}

/* Round profile photo: a seated person in front of a bright scene. */
const PhotoBadge = ({ sky, ground }: { sky: string; ground: string }) => (
  <svg width="20" height="20" viewBox="0 0 20 20">
    <circle cx="10" cy="10" r="9.600" fill={sky} stroke="#6f6b6c" strokeWidth="0.800" />
    <path d="M1 12.500Q5 9.500 9 12l10-2.500A9.200 9.200 0 0 1 1 12.500z" fill={ground} />
    <path d="M8 6.500q1-2.500 3.500-1.500 1.500 1.500 1.300 4l2.200 4-1 4.500-8 .5-2-2.500L8 11z" fill="#4a3f3b" />
    <path d="M9 10.500l3 .5.500 3-4 1.500z" fill={ground} />
    <circle cx="10.200" cy="7.200" r="1.400" fill="#d8b59c" />
  </svg>
);

const Word = () => (
  <svg width="30" height="28" viewBox="0 0 30 28">
    <path d="M8 0h20q2 0 2 2v5H6.500V1.500Q6.500 0 8 0z" fill="#41a5ee" />
    <path d="M6.500 7H30v7H6.500z" fill="#2b7cd3" />
    <path d="M6.500 14H30v7H6.500z" fill="#185abd" />
    <path d="M6.500 21H30v5q0 2-2 2H8.500q-2 0-2-2z" fill="#103f91" />
    <rect x="0" y="7.500" width="15" height="14.500" rx="1.500" fill="#1254b8" />
    <path d="M3 11l1.800 7.500L7.500 11.500l2.500 7L12 11" fill="none" stroke="#fff" strokeWidth="1.700" />
  </svg>
);

const apps: { node: ReactNode; state?: "run" | "active" }[] = [
  { node: <Windows /> },
  { node: <TaskSearch /> },
  { node: <TaskView /> },
  { node: <Copilot /> },
  { node: <Alexa /> },
  { node: <ExcelOld /> },
  { node: <Teams /> },
  { node: <Explorer />, state: "run" },
  { node: <Netflix />, state: "run" },
  { node: <Telegram /> },
  { node: <FaWhatsapp size={33} color="#128c52" /> },
  { node: <Sigma /> },
  { node: <Prime /> },
  { node: <WordOld /> },
  { node: <Slack /> },
  { node: <Edge /> },
  {
    node: (
      <Chrome
        badge={
          <span className="flex h-5 w-5 items-center justify-center rounded-full bg-[#c2185b] text-[11px] text-white">S</span>
        }
      />
    ),
    state: "active",
  },
  { node: <Chrome badge={<PhotoBadge sky="#c3c0cc" ground="#d9bd7a" />} />, state: "run" },
  { node: <Chrome badge={<PhotoBadge sky="#b3a9a4" ground="#c9a262" />} />, state: "run" },
  { node: <Word />, state: "run" },
];

function Weather() {
  return (
    <span className="relative ml-[26px] block h-[38px] w-[36px]">
      <svg width="30" height="26" viewBox="0 0 30 26" className="absolute bottom-[4px] left-0">
        <defs>
          <linearGradient id="sun" x1="0" y1="0" x2="0.600" y2="1">
            <stop offset="0" stopColor="#ffd400" />
            <stop offset="1" stopColor="#e65c00" />
          </linearGradient>
        </defs>
        <circle cx="15" cy="13" r="13" fill="url(#sun)" />
        <path d="M6 6h5M4 11h13" stroke="#fff0d8" strokeWidth="2.600" strokeLinecap="round" />
        <path d="M1.500 16h14M18 16h6M1.500 21h23" stroke="#dcc48a" strokeWidth="2.800" strokeLinecap="round" />
      </svg>
      <span className="absolute left-[14px] top-[-3px] flex h-5 w-5 items-center justify-center rounded-full bg-[#c42b1c] text-[12.500px] text-white">
        5
      </span>
    </span>
  );
}

function Taskbar() {
  return (
    <div className="flex h-[60px] shrink-0 items-center border-t border-[#c4b5b2] bg-[linear-gradient(to_right,#fce9e6_0%,#fbe6e4_20%,#fceae6_40%,#fce8e4_62%,#f4eeeb_72%,#f7ebe8_80%,#fce8e5_90%)] font-['Noto_Sans','Open_Sans',sans-serif] text-[#1b1b1b]">
      <Weather />
      <div className="ml-[338.500px] flex h-full">
        {apps.map((a, i) => (
          <div key={i} className="relative flex h-[59px] w-[55.100px] items-center justify-center pb-[2px]">
            {a.state === "active" && (
              <span className="absolute left-[3px] top-[5px] h-[49px] w-[48px] rounded-[4px] border border-[#efe3e1] bg-[#fdf7f5]" />
            )}
            <span className="relative flex items-center justify-center">{a.node}</span>
            {a.state === "run" && <span className="absolute bottom-[6px] h-[4px] w-[8px] rounded-full bg-[#8d8583]" />}
            {a.state === "active" && <span className="absolute bottom-[6px] h-[4px] w-[20px] rounded-full bg-[#25828f]" />}
          </div>
        ))}
      </div>
      <svg width="14" height="9" viewBox="0 0 14 9" className="ml-auto" fill="none" stroke="#1b1b1b" strokeWidth="1.600">
        <path d="M.8 8L7 1.500 13.200 8" />
      </svg>
      <svg width="21" height="17" viewBox="0 0 21 17" className="ml-[23px]">
        <path d="M5 14.500q-4-.3-4-4 .2-3.400 3.700-3.800Q6 2 10.500 2q4.300 0 5.300 4.200 4.200.3 4.200 4.300-.2 3.700-4 4z" fill="#a9a5a4" stroke="#1b1b1b" strokeWidth="1.400" />
        <path d="M2 11q5-1.500 8-4 4 4 9 4-.5 2.800-3.500 3H5.500q-3 0-3.500-3z" fill="#e2dfde" />
        <path d="M3 1l15 15" stroke="#1b1b1b" strokeWidth="1.500" />
      </svg>
      <span className="mb-[2px] ml-[23px] flex w-[29px] flex-col items-center text-[15px] leading-[20px]">
        <Fit w={29}>ENG</Fit>
        <Fit w={14}>IN</Fit>
      </span>
      <svg width="20" height="15" viewBox="0 0 20 15" className="mb-px ml-[23px]" fill="none" stroke="#1b1b1b" strokeWidth="1.400">
        <path d="M.6 6q9.400-9.500 18.800 0M3.500 8.700q6.500-6 13 0M6.300 11q3.700-3 7.400 0" />
        <circle cx="10" cy="12.900" r="1.600" fill="#1b1b1b" stroke="none" />
      </svg>
      <svg width="21" height="17" viewBox="0 0 21 17" className="mb-px ml-[10px]" fill="none" stroke="#1b1b1b" strokeWidth="1.300">
        <path d="M.8 6h3L8.200 1.500v14L3.800 11h-3zM11 5.500q2 3 0 6M13.700 3.300q3.600 5.200 0 10.400M16.400 1.300q5.600 7.200 0 14.400" />
      </svg>
      <svg width="21" height="13" viewBox="0 0 21 13" className="mb-px ml-[9px]" fill="none" stroke="#1b1b1b" strokeWidth="1.500">
        <rect x="0.800" y="0.900" width="16.600" height="11.200" rx="2.500" />
        <rect x="3.200" y="3.300" width="8" height="6.400" rx="1" fill="#1b1b1b" stroke="none" />
        <path d="M18.800 4.500v4" strokeWidth="2.400" />
      </svg>
      <span className="mb-[3px] ml-[20px] mr-[24px] flex flex-col items-end text-[15px] leading-[20px]">
        <Fit w={36}>13:58</Fit>
        <Fit w={78}>29-03-2025</Fit>
      </span>
    </div>
  );
}

export default function App() {
  return (
    <div className="flex h-[1080px] w-[1920px] flex-col overflow-hidden font-['Inter',sans-serif]">
      <Browser />
      <TopHeader />
      <div className="flex min-h-0 flex-1 bg-[#413735]">
        <Sidebar />
        <div className="flex min-w-0 flex-1 flex-col">
          <EditorBar />
          <Canvas />
        </div>
      </div>
      <Taskbar />
    </div>
  );
}
